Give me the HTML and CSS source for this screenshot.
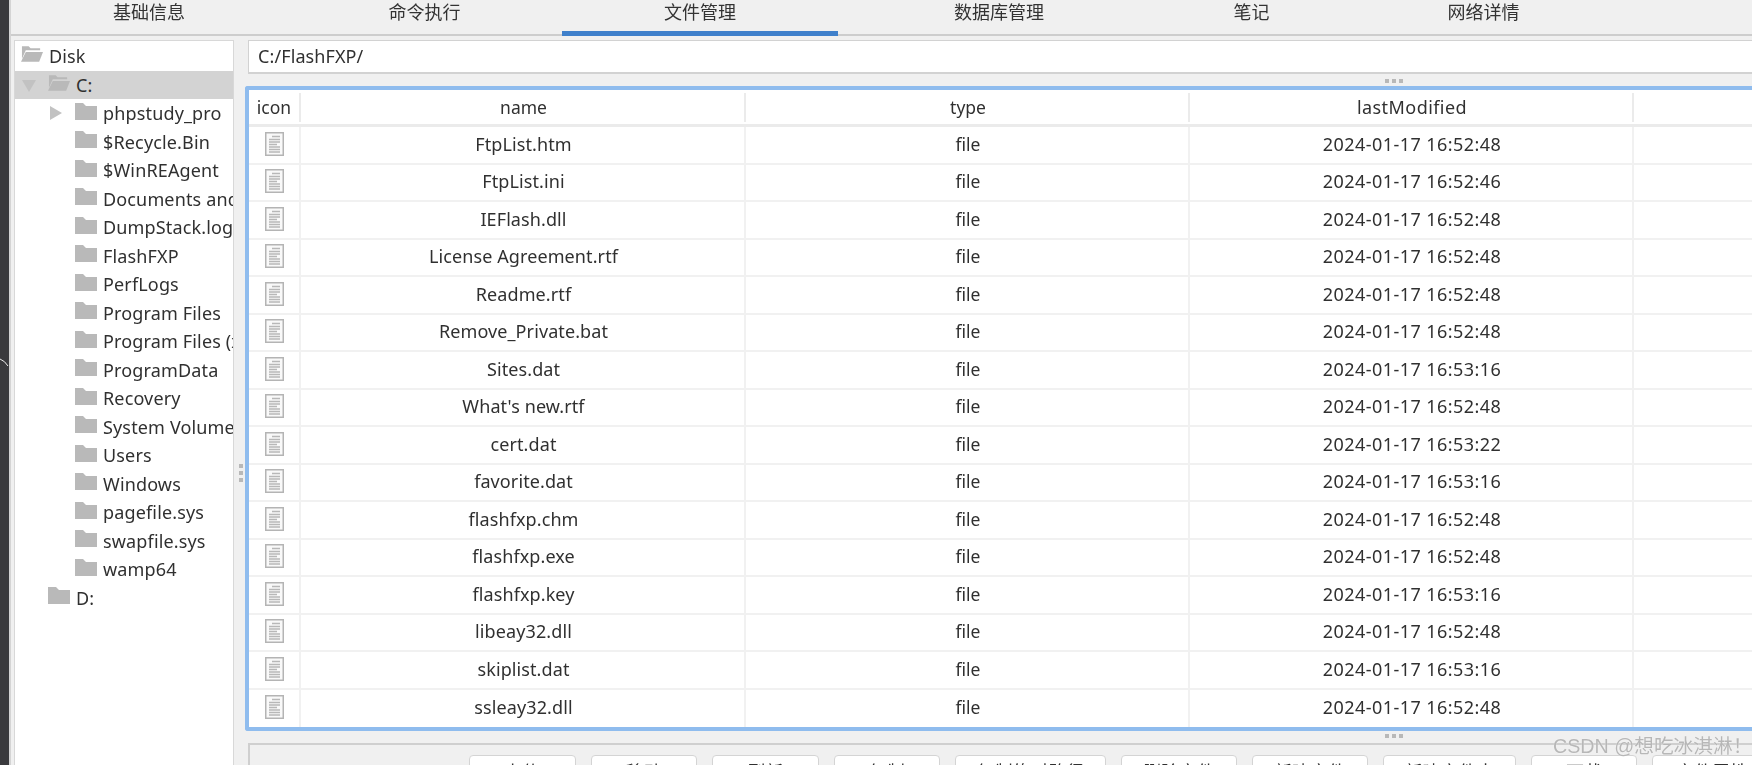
FILE: index.html
```html
<!DOCTYPE html>
<html lang="zh">
<head>
<meta charset="utf-8">
<title>文件管理</title>
<link rel="stylesheet" href="styles.css">
</head>
<body>
<svg class="defs" width="0" height="0" aria-hidden="true">
  <symbol id="folder" viewBox="0 0 22 17"><path d="M0 0H8L11 3H22V17H0Z" fill="#b9b9b9"/></symbol>
  <symbol id="folder-open" viewBox="0 0 23 16"><path d="M1 0H8L10 2H20V4H5L1 13Z" fill="#b9b9b9"/><path d="M5 6H23L19 16H0Z" fill="#b9b9b9"/></symbol>
  <symbol id="doc" viewBox="0 0 19 24"><rect x=".75" y=".75" width="17.5" height="22.5" fill="#f9f9f9" stroke="#b4b4b4" stroke-width="1.5"/><path d="M7 4.5H15M4 7.5H15M4 10H15M4 12.5H12M4 15H15M4 17.5H15M4 20H15" stroke="#b8b8b8" stroke-width="1.3"/></symbol>
</svg>
<div class="page">
  <div class="edge"><svg class="edge-mark" width="10" height="12" viewBox="0 0 10 12"><path d="M0 1Q5 3 8 8" fill="none" stroke="#eee" stroke-width="1"/></svg></div>
  <div class="app">
    <nav class="tabs">
      <div class="tab t1">基础信息</div>
      <div class="tab t2">命令执行</div>
      <div class="tab t3 active">文件管理</div>
      <div class="tab t4">数据库管理</div>
      <div class="tab t5">笔记</div>
      <div class="tab t6">网络详情</div>
    </nav>
    <main class="main">
      <aside class="tree">
        <div class="node lvl0"><span class="arrow"></span><svg class="ficon open"><use href="#folder-open"/></svg><span>Disk</span></div>
        <div class="node lvl1 selected"><span class="arrow down"></span><svg class="ficon open"><use href="#folder-open"/></svg><span>C:</span></div>
        <div class="node lvl2"><span class="arrow right"></span><svg class="ficon"><use href="#folder"/></svg><span>phpstudy_pro</span></div>
        <div class="node lvl2"><span class="arrow"></span><svg class="ficon"><use href="#folder"/></svg><span>$Recycle.Bin</span></div>
        <div class="node lvl2"><span class="arrow"></span><svg class="ficon"><use href="#folder"/></svg><span>$WinREAgent</span></div>
        <div class="node lvl2"><span class="arrow"></span><svg class="ficon"><use href="#folder"/></svg><span>Documents and Settings</span></div>
        <div class="node lvl2"><span class="arrow"></span><svg class="ficon"><use href="#folder"/></svg><span>DumpStack.log.tmp</span></div>
        <div class="node lvl2"><span class="arrow"></span><svg class="ficon"><use href="#folder"/></svg><span>FlashFXP</span></div>
        <div class="node lvl2"><span class="arrow"></span><svg class="ficon"><use href="#folder"/></svg><span>PerfLogs</span></div>
        <div class="node lvl2"><span class="arrow"></span><svg class="ficon"><use href="#folder"/></svg><span>Program Files</span></div>
        <div class="node lvl2"><span class="arrow"></span><svg class="ficon"><use href="#folder"/></svg><span>Program Files (x86)</span></div>
        <div class="node lvl2"><span class="arrow"></span><svg class="ficon"><use href="#folder"/></svg><span>ProgramData</span></div>
        <div class="node lvl2"><span class="arrow"></span><svg class="ficon"><use href="#folder"/></svg><span>Recovery</span></div>
        <div class="node lvl2"><span class="arrow"></span><svg class="ficon"><use href="#folder"/></svg><span>System Volume Information</span></div>
        <div class="node lvl2"><span class="arrow"></span><svg class="ficon"><use href="#folder"/></svg><span>Users</span></div>
        <div class="node lvl2"><span class="arrow"></span><svg class="ficon"><use href="#folder"/></svg><span>Windows</span></div>
        <div class="node lvl2"><span class="arrow"></span><svg class="ficon"><use href="#folder"/></svg><span>pagefile.sys</span></div>
        <div class="node lvl2"><span class="arrow"></span><svg class="ficon"><use href="#folder"/></svg><span>swapfile.sys</span></div>
        <div class="node lvl2"><span class="arrow"></span><svg class="ficon"><use href="#folder"/></svg><span>wamp64</span></div>
        <div class="node lvl1"><span class="arrow"></span><svg class="ficon"><use href="#folder"/></svg><span>D:</span></div>
      </aside>
      <div class="vsplit"><i></i><i></i><i></i></div>
      <section class="content">
        <div class="path">C:/FlashFXP/</div>
        <div class="hsplit"><i></i><i></i><i></i></div>
        <div class="frame">
          <div class="row head"><div class="cell">icon</div><div class="cell">name</div><div class="cell">type</div><div class="cell">lastModified</div><div class="cell blank"></div></div>
          <div class="row"><div class="cell"><svg class="doc"><use href="#doc"/></svg></div><div class="cell">FtpList.htm</div><div class="cell">file</div><div class="cell">2024-01-17 16:52:48</div><div class="cell blank"></div></div>
          <div class="row"><div class="cell"><svg class="doc"><use href="#doc"/></svg></div><div class="cell">FtpList.ini</div><div class="cell">file</div><div class="cell">2024-01-17 16:52:46</div><div class="cell blank"></div></div>
          <div class="row"><div class="cell"><svg class="doc"><use href="#doc"/></svg></div><div class="cell">IEFlash.dll</div><div class="cell">file</div><div class="cell">2024-01-17 16:52:48</div><div class="cell blank"></div></div>
          <div class="row"><div class="cell"><svg class="doc"><use href="#doc"/></svg></div><div class="cell">License Agreement.rtf</div><div class="cell">file</div><div class="cell">2024-01-17 16:52:48</div><div class="cell blank"></div></div>
          <div class="row"><div class="cell"><svg class="doc"><use href="#doc"/></svg></div><div class="cell">Readme.rtf</div><div class="cell">file</div><div class="cell">2024-01-17 16:52:48</div><div class="cell blank"></div></div>
          <div class="row"><div class="cell"><svg class="doc"><use href="#doc"/></svg></div><div class="cell">Remove_Private.bat</div><div class="cell">file</div><div class="cell">2024-01-17 16:52:48</div><div class="cell blank"></div></div>
          <div class="row"><div class="cell"><svg class="doc"><use href="#doc"/></svg></div><div class="cell">Sites.dat</div><div class="cell">file</div><div class="cell">2024-01-17 16:53:16</div><div class="cell blank"></div></div>
          <div class="row"><div class="cell"><svg class="doc"><use href="#doc"/></svg></div><div class="cell">What's new.rtf</div><div class="cell">file</div><div class="cell">2024-01-17 16:52:48</div><div class="cell blank"></div></div>
          <div class="row"><div class="cell"><svg class="doc"><use href="#doc"/></svg></div><div class="cell">cert.dat</div><div class="cell">file</div><div class="cell">2024-01-17 16:53:22</div><div class="cell blank"></div></div>
          <div class="row"><div class="cell"><svg class="doc"><use href="#doc"/></svg></div><div class="cell">favorite.dat</div><div class="cell">file</div><div class="cell">2024-01-17 16:53:16</div><div class="cell blank"></div></div>
          <div class="row"><div class="cell"><svg class="doc"><use href="#doc"/></svg></div><div class="cell">flashfxp.chm</div><div class="cell">file</div><div class="cell">2024-01-17 16:52:48</div><div class="cell blank"></div></div>
          <div class="row"><div class="cell"><svg class="doc"><use href="#doc"/></svg></div><div class="cell">flashfxp.exe</div><div class="cell">file</div><div class="cell">2024-01-17 16:52:48</div><div class="cell blank"></div></div>
          <div class="row"><div class="cell"><svg class="doc"><use href="#doc"/></svg></div><div class="cell">flashfxp.key</div><div class="cell">file</div><div class="cell">2024-01-17 16:53:16</div><div class="cell blank"></div></div>
          <div class="row"><div class="cell"><svg class="doc"><use href="#doc"/></svg></div><div class="cell">libeay32.dll</div><div class="cell">file</div><div class="cell">2024-01-17 16:52:48</div><div class="cell blank"></div></div>
          <div class="row"><div class="cell"><svg class="doc"><use href="#doc"/></svg></div><div class="cell">skiplist.dat</div><div class="cell">file</div><div class="cell">2024-01-17 16:53:16</div><div class="cell blank"></div></div>
          <div class="row"><div class="cell"><svg class="doc"><use href="#doc"/></svg></div><div class="cell">ssleay32.dll</div><div class="cell">file</div><div class="cell">2024-01-17 16:52:48</div><div class="cell blank"></div></div>
        </div>
        <div class="hsplit low"><i></i><i></i><i></i></div>
        <div class="actions">
          <button class="btn b1">上传</button>
          <button class="btn b1">移动</button>
          <button class="btn b1">刷新</button>
          <button class="btn b1">复制</button>
          <button class="btn b2">复制绝对路径</button>
          <button class="btn b3">删除文件</button>
          <button class="btn b4">新建文件</button>
          <button class="btn b5">新建文件夹</button>
          <button class="btn b6">下载</button>
          <button class="btn b7">文件属性</button>
        </div>
      </section>
    </main>
  </div>
  <div class="watermark">CSDN @想吃冰淇淋！</div>
</div>
</body>
</html>
```
FILE: styles.css
```css
* { box-sizing: border-box; }
html, body { margin: 0; height: 100%; overflow: hidden; }
body { background: #f0f0f0; font-family: "Noto Sans", "Noto Sans CJK SC", sans-serif; font-size: 18px; color: #303030; }
.defs { position: absolute; }
.page { position: relative; display: flex; width: 1752px; height: 765px; overflow: hidden; }
.edge { position: relative; flex: 0 0 11px; background: #3a3a3d; border-right: 2px solid #d4d4d4; }
.edge-mark { position: absolute; left: 0; top: 358px; }
.app { flex: 1 1 auto; min-width: 0; display: flex; flex-direction: column; filter: blur(0.45px); }

.tabs { flex: 0 0 36px; display: flex; background: #f0f0f0; }
.tabs::after { content: ""; flex: 1 1 auto; border-bottom: 2px solid #cdcdcd; }
.tab { flex: 0 0 auto; height: 36px; line-height: 24px; text-align: center; font-size: 18px; color: #333; border-bottom: 2px solid #cdcdcd; }
.t1 { width: 276px; }
.t2 { width: 275px; }
.t3 { width: 276px; }
.t4 { width: 322px; }
.t5 { width: 183px; }
.t6 { width: 281px; }
.tab.active { border-bottom: 5px solid #3f80cb; }

.main { flex: 1 1 auto; min-height: 0; display: flex; padding: 4px 0 0 3px; }
.tree { flex: 0 0 220px; background: #fff; border: 1px solid #d8d8d8; border-bottom: 0; padding-top: 1px; overflow: hidden; }
.node { position: relative; height: 28.5px; display: flex; align-items: center; white-space: nowrap; font-size: 18px; letter-spacing: .15px; }
.node.selected { background: #d3d3d3; }
.lvl0 { padding-left: 6px; }
.lvl1 { padding-left: 33px; }
.lvl2 { padding-left: 60px; }
.arrow { position: absolute; top: 50%; width: 0; height: 0; }
.arrow.down { left: 7px; margin-top: -5px; border-left: 7px solid transparent; border-right: 7px solid transparent; border-top: 12px solid #c2c2c2; }
.arrow.right { left: 35px; margin-top: -7px; border-top: 7px solid transparent; border-bottom: 7px solid transparent; border-left: 12px solid #c2c2c2; }
.ficon { flex: 0 0 22px; width: 22px; height: 17px; margin-right: 6px; position: relative; top: -2px; }
.ficon.open { height: 16px; }

.vsplit { flex: 0 0 14px; display: flex; flex-direction: column; align-items: center; justify-content: center; gap: 3px; padding: 141px 1px 0 0; }
.vsplit i, .hsplit i { display: block; width: 4px; height: 4px; background: #b8b8b8; }
.content { flex: 0 0 2298px; margin-left: -3px; display: flex; flex-direction: column; }
.path { flex: 0 0 33px; margin-left: 3px; padding-left: 9px; line-height: 31px; background: #fff; border: 1px solid #d2d2d2; border-bottom-width: 2px; border-right: 0; font-size: 18px; letter-spacing: .1px; }
.hsplit { flex: 0 0 12px; display: flex; align-items: center; justify-content: center; gap: 3px; padding-top: 2px; }
.hsplit.low { padding: 0 0 2px; }

.frame { flex: 0 0 645px; background: #fff; border: 4px solid #8fbcee; border-right: 0; border-radius: 3px 0 0 3px; display: grid; grid-template-rows: 37px repeat(16, 37.5px); overflow: hidden; }
.row { display: grid; grid-template-columns: 52px 445px 444px 444px 1fr; border-bottom: 2px solid #f1f1f1; }
.row.head { border-bottom: 3px solid #ebebeb; }
.row:last-child { border-bottom: 0; }
.cell { display: flex; align-items: center; justify-content: center; padding: 0 0 2px 2px; border-right: 2px solid #f1f1f1; white-space: nowrap; font-size: 17.5px; }
.cell:first-child { padding-left: 0; }
.cell:nth-child(2) { font-size: 18px; letter-spacing: .1px; }
.cell:nth-child(4) { font-size: 18px; letter-spacing: .44px; }
.head .cell { margin: 3px 0 2px; border-right-color: #ebebeb; }
.head .cell:nth-child(2) { font-size: 17.5px; letter-spacing: 0; }
.cell.blank { border-right: 0; }
.doc { width: 19px; height: 24px; }

.actions { flex: 1 1 auto; margin-left: 3px; display: flex; align-items: flex-start; gap: 15px; padding: 10px 0 0 219px; border: 1px solid #cfcfcf; border-width: 2px 0 0 2px; overflow: hidden; }
.btn { flex: 0 0 auto; height: 32px; padding: 0; background: #fff; border: 1px solid #d4d4d4; border-radius: 4px; font: inherit; color: #303030; }
.b1 { width: 106.5px; }
.b2 { width: 151px; }
.b3 { width: 116px; }
.b4 { width: 116px; }
.b5 { width: 133px; }
.b6 { width: 106px; }
.b7 { width: 120px; }

.watermark { position: absolute; left: 1553px; top: 733px; font-size: 19.7px; line-height: 26px; color: rgba(165, 165, 165, .8); font-family: "Liberation Sans", "Noto Sans CJK SC", sans-serif; text-shadow: 0 0 1px #fff; white-space: nowrap; }
```
